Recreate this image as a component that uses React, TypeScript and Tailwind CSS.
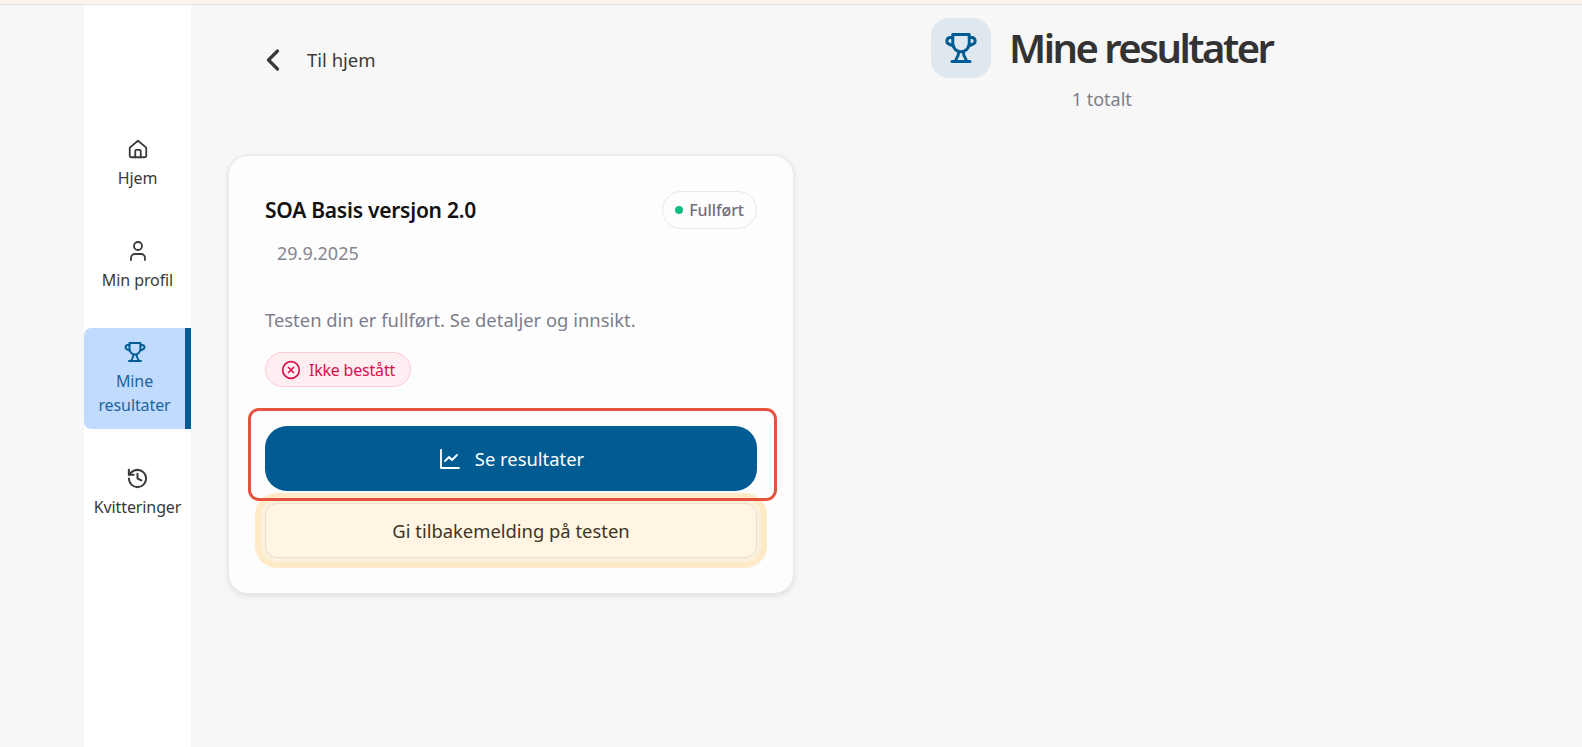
import { ChevronLeft, CircleX, History, User } from "lucide-react";

function Trophy({ className }: { className: string }) {
  return (
    <svg viewBox="0 0 24 24" fill="none" stroke="currentColor" strokeWidth="2" strokeLinecap="round" strokeLinejoin="round" className={className}>
      <path d="M6.5 3h11v6a5.5 5.5 0 0 1-11 0V3z" />
      <path d="M6.5 5H4.8a2.3 2.3 0 0 0-.6 4.5L6.8 10.500" />
      <path d="M17.500 5h1.700a2.300 2.300 0 0 1 .6 4.500L17.200 10.500" />
      <path d="M10.500 14.500c0 2.500-1 4-2 5.500M13.500 14.500c0 2.500 1 4 2 5.500" />
      <path d="M6 21h12" />
    </svg>
  );
}

function Home({ className }: { className: string }) {
  return (
    <svg viewBox="0 0 24 24" fill="none" stroke="currentColor" strokeWidth="2" strokeLinecap="round" strokeLinejoin="round" className={className}>
      <path d="M3 10.500 12 3l9 7.500V19a2 2 0 0 1-2 2H5a2 2 0 0 1-2-2z" />
      <path d="M9 21v-7a1 1 0 0 1 1-1h4a1 1 0 0 1 1 1v7" />
    </svg>
  );
}

function Chart({ className }: { className: string }) {
  return (
    <svg viewBox="0 0 24 24" fill="none" stroke="currentColor" strokeWidth="1.800" strokeLinecap="round" strokeLinejoin="round" className={className}>
      <path d="M3 3v18h18" />
      <path d="m7 14 4-4 3 3 5-5" />
    </svg>
  );
}

export default function App() {
  return (
    <div className="min-h-[747px] bg-[#f7f7f7] font-['Noto_Sans',sans-serif] text-[#3a3a3a] overflow-hidden">
      <div className="h-[5px] bg-[#fdf3ec] border-b border-[#e6e3e1]" />
      <div className="flex h-[742px]">
        <div className="w-[84px]" />
        <nav className="w-[107px] bg-white flex flex-col pt-[129px] text-[16px] tracking-[-0.1px] leading-[24px]">
          <a className="h-[56px] flex flex-col items-center">
            <Home className="w-[22px] h-[22px] text-[#3a3a3a] mt-[4px]" />
            <span className="mt-[6px]">Hjem</span>
          </a>
          <a className="h-[56px] mt-[46px] flex flex-col items-center">
            <User className="w-[24px] h-[24px] text-[#3a3a3a] mt-[3px]" strokeWidth={1.8} />
            <span className="mt-[5px]">Min profil</span>
          </a>
          <a className="h-[101px] mt-[36px] flex flex-col items-center bg-[#c1dbff] rounded-l-[7px] border-r-[6px] border-[#005c93] text-[#1d659d]">
            <Trophy className="w-[24px] h-[24px] text-[#005c93] mt-[12px]" />
            <span className="text-center mt-[5px]">Mine<br />resultater</span>
          </a>
          <a className="h-[56px] mt-[36px] flex flex-col items-center">
            <History className="w-[23px] h-[23px] text-[#3a3a3a] mt-[2px]" strokeWidth={2.1} />
            <span className="mt-[5px]">Kvitteringer</span>
          </a>
        </nav>
        <main className="flex-1 pl-[37px]">
          <header className="h-[150px] flex items-start">
            <a className="flex items-center w-[703px] pl-[35px] pt-[37px]">
              <ChevronLeft className="w-[36px] h-[36px] text-[#3a3a3a] -ml-[8px]" strokeWidth={2.200} />
              <span className="ml-[16px] text-[18.500px]">Til hjem</span>
            </a>
            <div className="flex flex-col items-center pt-[13px]">
              <div className="flex items-center gap-[18px]">
                <div className="w-[60px] h-[60px] rounded-[18px] bg-[#e0e8ef] flex items-center justify-center">
                  <Trophy className="w-[36px] h-[36px] text-[#005c93]" />
                </div>
                <h1 className="text-[40px] leading-[60px] font-semibold tracking-[-2.500px] text-[#333]">Mine resultater</h1>
              </div>
              <p className="text-[18px] text-[#7d7d8c] mt-[8px]">1 totalt</p>
            </div>
          </header>
          <section className="relative w-[566px] h-[439px] bg-[#fdfdfd] border border-[#e8e8e8] rounded-[20px] shadow-[0_2px_6px_rgba(0,0,0,0.1)] px-[36px] pt-[35px]">
            <div className="flex items-center justify-between h-[38px]">
              <h2 className="text-[21px] font-semibold tracking-[-0.25px] text-[#111] relative top-px">SOA Basis versjon 2.0</h2>
              <span className="h-[38px] w-[95px] rounded-full border border-[#e8e8e8] flex items-center justify-center gap-[6px] text-[16px] font-medium text-[#70707c] tracking-[-0.1px]">
                <span className="w-[8px] h-[8px] rounded-full bg-[#10bd7e]" />
                Fullført
              </span>
            </div>
            <p className="ml-[12px] mt-[12px] text-[18px] leading-[25px] text-[#858592]">29.9.2025</p>
            <p className="mt-[41px] text-[18.400px] leading-[25px] text-[#7d7d8c]">Testen din er fullført. Se detaljer og innsikt.</p>
            <div className="mt-[20px] w-[146px] h-[35px] rounded-full bg-[#ffeef1] border border-[#fdcbd5] flex items-center justify-center gap-[8px] text-[16px] text-[#d80f4e] tracking-[-0.2px]">
              <CircleX className="w-[20px] h-[20px]" strokeWidth={2} />
              Ikke bestått
            </div>
            <div className="relative mt-[39px]">
              <button className="w-full h-[65px] rounded-[22px] bg-[#005c93] text-white flex items-center justify-center gap-[13px] text-[18.400px]">
                <Chart className="w-[24px] h-[24px]" />
                Se resultater
              </button>
              <div className="absolute -left-[17px] -right-[20px] -top-[18px] -bottom-[10px] border-[3.500px] border-[#e5533d] rounded-[11px]" />
            </div>
            <button className="mt-[12px] w-full h-[55px] rounded-[12px] bg-[#fff5e2] border border-[#e8dfcd] shadow-[0_0_0_4px_#fbf0dc,0_0_0_10px_#fdebc8] text-[18.400px] text-[#3d3426]">
              Gi tilbakemelding på testen
            </button>
          </section>
        </main>
      </div>
    </div>
  );
}
